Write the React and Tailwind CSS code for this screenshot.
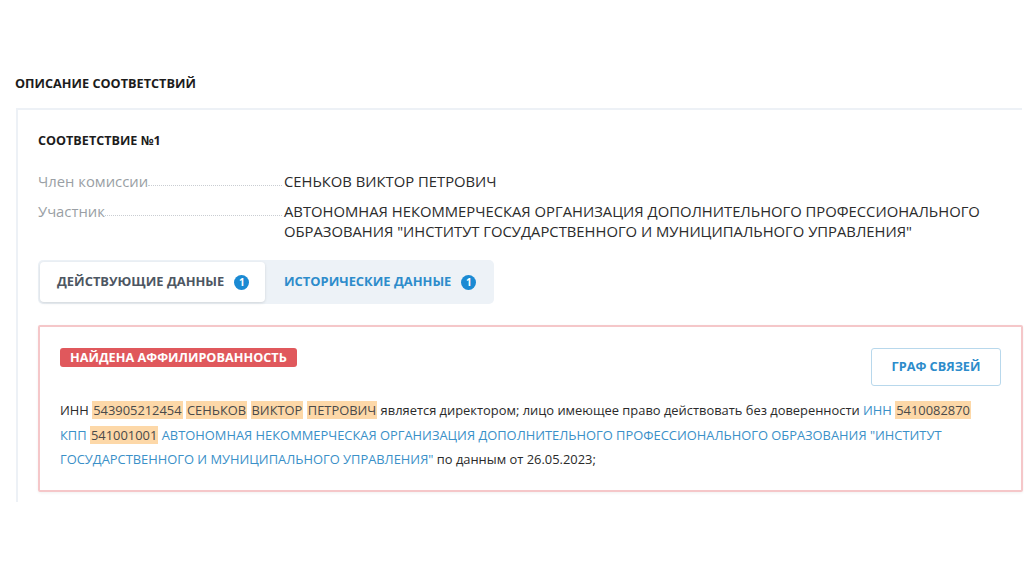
import React from "react";

const Hl = ({ children }) => (
  <span className="bg-[#fdd8a8] text-[#4a4a4a] px-[1px]">{children}</span>
);

const Row = ({ label, children }) => (
  <div className="flex items-start text-[14.8px] leading-[20px]">
    <div className="w-[246px] h-[20px] shrink-0 flex items-end text-[#9a9fa5]">
      <span>{label}</span>
      <span className="flex-1 border-b border-dotted border-[#c9cdd2] mb-[5px] mr-[2px]" />
    </div>
    <div className="text-[#2b2b2b] flex-1">{children}</div>
  </div>
);

const Badge = () => (
  <span className="ml-[10px] inline-flex w-[15px] h-[15px] rounded-full bg-[#1b8ad3] text-white text-[10px] font-bold items-center justify-center leading-none">
    1
  </span>
);

export default function App() {
  return (
    <div className="w-[1024px] h-[574px] bg-white overflow-hidden font-['Open_Sans',sans-serif]">
      <div className="pt-[75px] pl-[15px]">
        <h2 className="text-[12.7px] leading-[16px] font-bold text-[#1c1c1c]">ОПИСАНИЕ СООТВЕТСТВИЙ</h2>
      </div>

      <div className="mt-[17px] ml-[16px] w-[1006px] h-[394px] border-l-2 border-t-2 border-[#edf1f6] pl-[20px] pt-[23px]">
        <h3 className="text-[12.6px] leading-[16px] font-bold text-[#1c1c1c]">СООТВЕТСТВИЕ №1</h3>

        <div className="mt-[22px] flex flex-col gap-[10px]">
          <Row label="Член комиссии">СЕНЬКОВ ВИКТОР ПЕТРОВИЧ</Row>
          <Row label="Участник">
            АВТОНОМНАЯ НЕКОММЕРЧЕСКАЯ ОРГАНИЗАЦИЯ ДОПОЛНИТЕЛЬНОГО ПРОФЕССИОНАЛЬНОГО ОБРАЗОВАНИЯ "ИНСТИТУТ ГОСУДАРСТВЕННОГО И МУНИЦИПАЛЬНОГО УПРАВЛЕНИЯ"
          </Row>
        </div>

        <div className="mt-[19px] w-[456px] h-[44px] bg-[#edf2f7] rounded-[5px] p-[2px] flex">
          <div className="w-[225px] h-full bg-white rounded-[4px] shadow-[0_1px_3px_rgba(0,0,0,0.12)] flex items-center pl-[17px] text-[12.9px] font-bold text-[#4d5662]">
            ДЕЙСТВУЮЩИЕ ДАННЫЕ
            <Badge />
          </div>
          <div className="flex items-center pl-[19px] text-[12.9px] font-bold text-[#2d8ccb]">
            ИСТОРИЧЕСКИЕ ДАННЫЕ
            <Badge />
          </div>
        </div>

        <div className="mt-[21px] w-[985px] h-[167px] border-2 border-[#f5c7c9] rounded-[2px] shadow-[0_1px_3px_rgba(0,0,0,0.06)] pl-[20px] pr-[20px] pt-[21px]">
          <div className="flex justify-between items-start">
            <span className="h-[19px] px-[10px] bg-[#e0585c] text-white text-[12.7px] font-bold rounded-[3px] flex items-center">
              НАЙДЕНА АФФИЛИРОВАННОСТЬ
            </span>
            <button className="w-[130px] h-[38px] border border-[#b8d8ec] rounded-[3px] text-[12.7px] font-bold text-[#2d8ccb]">
              ГРАФ СВЯЗЕЙ
            </button>
          </div>
          <p className="mt-[12px] text-[12.9px] leading-[24.5px] text-[#2a2a2a] pr-[2px]">
            ИНН <Hl>543905212454</Hl> <Hl>СЕНЬКОВ</Hl> <Hl>ВИКТОР</Hl> <Hl>ПЕТРОВИЧ</Hl> является директором; лицо имеющее право действовать без доверенности{" "}
            <span className="text-[#3a90c8]">ИНН</span> <Hl>5410082870</Hl>{" "}
            <span className="text-[#3a90c8]">КПП</span> <Hl>541001001</Hl>{" "}
            <span className="text-[#3a90c8]">
              АВТОНОМНАЯ НЕКОММЕРЧЕСКАЯ ОРГАНИЗАЦИЯ ДОПОЛНИТЕЛЬНОГО ПРОФЕССИОНАЛЬНОГО ОБРАЗОВАНИЯ "ИНСТИТУТ ГОСУДАРСТВЕННОГО И МУНИЦИПАЛЬНОГО УПРАВЛЕНИЯ"
            </span>{" "}
            по данным от 26.05.2023;
          </p>
        </div>
      </div>
    </div>
  );
}
